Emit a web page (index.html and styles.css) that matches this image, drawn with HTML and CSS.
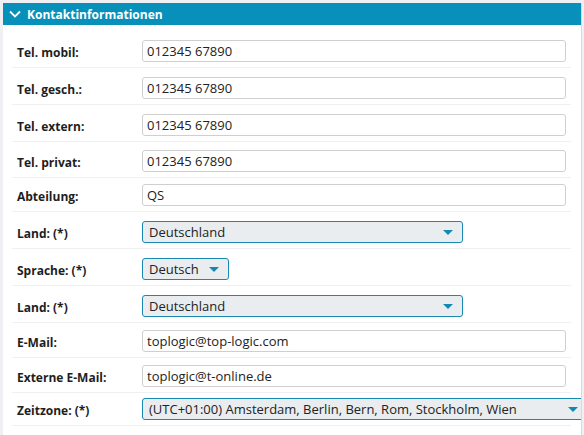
FILE: index.html
```html
<!DOCTYPE html>
<html lang="de">
<head>
<meta charset="utf-8">
<title>Kontaktinformationen</title>
<link rel="stylesheet" href="styles.css">
</head>
<body>
<div class="panel">
  <div class="panel-head">
    <svg class="chev" width="12" height="8" viewBox="0 0 12 8"><path d="M1 1.5 L6 6.5 L11 1.5" fill="none" stroke="#fff" stroke-width="1.8"/></svg>
    <span>Kontaktinformationen</span>
  </div>
  <div class="form">
    <div class="row"><label>Tel. mobil:</label><div class="input">012345 67890</div></div>
    <div class="row"><label>Tel. gesch.:</label><div class="input">012345 67890</div></div>
    <div class="row"><label>Tel. extern:</label><div class="input">012345 67890</div></div>
    <div class="row"><label>Tel. privat:</label><div class="input">012345 67890</div></div>
    <div class="row"><label>Abteilung:</label><div class="input">QS</div></div>
    <div class="row"><label>Land: (*)</label><div class="select sel-land">Deutschland<span class="arrow"></span></div></div>
    <div class="row"><label>Sprache: (*)</label><div class="select sel-lang">Deutsch<span class="arrow"></span></div></div>
    <div class="row"><label>Land: (*)</label><div class="select sel-land">Deutschland<span class="arrow"></span></div></div>
    <div class="row"><label>E-Mail:</label><div class="input">toplogic@top-logic.com</div></div>
    <div class="row"><label>Externe E-Mail:</label><div class="input">toplogic@t-online.de</div></div>
    <div class="row"><label>Zeitzone: (*)</label><div class="select sel-tz">(UTC+01:00) Amsterdam, Berlin, Bern, Rom, Stockholm, Wien<span class="arrow"></span></div></div>
  </div>
</div>
</body>
</html>
```
FILE: styles.css
```css
html, body {
  margin: 0;
  padding: 0;
}
body {
  background: #eef0f3;
  font-family: "Open Sans", "Noto Sans", sans-serif;
  color: #222;
  width: 584px;
  height: 435px;
  overflow: hidden;
}
.panel {
  margin: 3px 0 0 3px;
  width: 578px;
  height: 432px;
  background: #fff;
  border-right: 1px solid #d6d9dd;
  overflow: hidden;
  box-sizing: content-box;
}
.panel-head {
  height: 22px;
  background: #0790b9;
  color: #fff;
  font-weight: 700;
  font-size: 12px;
  display: flex;
  align-items: center;
  padding-left: 6px;
  gap: 6px;
}
.chev {
  display: block;
}
.form {
  padding-top: 6px;
  margin: 0 10px 0 9px;
  display: grid;
  grid-template-rows: 37px 37px 37px 36px 34px 37px 37px 37px 35px 35px 33px;
}
.row {
  display: grid;
  grid-template-columns: 130px 1fr;
  align-items: end;
  border-bottom: 1px solid #eef0f2;
  padding-bottom: 5px;
  box-sizing: border-box;
  min-width: 0;
}
.row label {
  font-weight: 700;
  font-size: 12px;
  padding-left: 5px;
  line-height: 22px;
  position: relative;
  top: 2px;
  color: #1e1e1e;
}
.input {
  height: 22px;
  box-sizing: border-box;
  border: 1px solid #cfcfcf;
  border-radius: 3px;
  font-size: 13px;
  line-height: 20px;
  padding-left: 4px;
  color: #222;
  width: 424px;
}
.select {
  position: relative;
  height: 22px;
  box-sizing: border-box;
  border: 1px solid #1789b3;
  border-radius: 3px;
  background: #e9edf0;
  font-size: 13px;
  line-height: 20px;
  padding-left: 6px;
  color: #222;
  white-space: nowrap;
}
.sel-land { width: 321px; }
.sel-lang { width: 87px; }
.sel-tz { width: 446px; }
.arrow {
  position: absolute;
  right: 9px;
  top: 8px;
  width: 0;
  height: 0;
  border-left: 5px solid transparent;
  border-right: 5px solid transparent;
  border-top: 5px solid #1189b5;
}
```
